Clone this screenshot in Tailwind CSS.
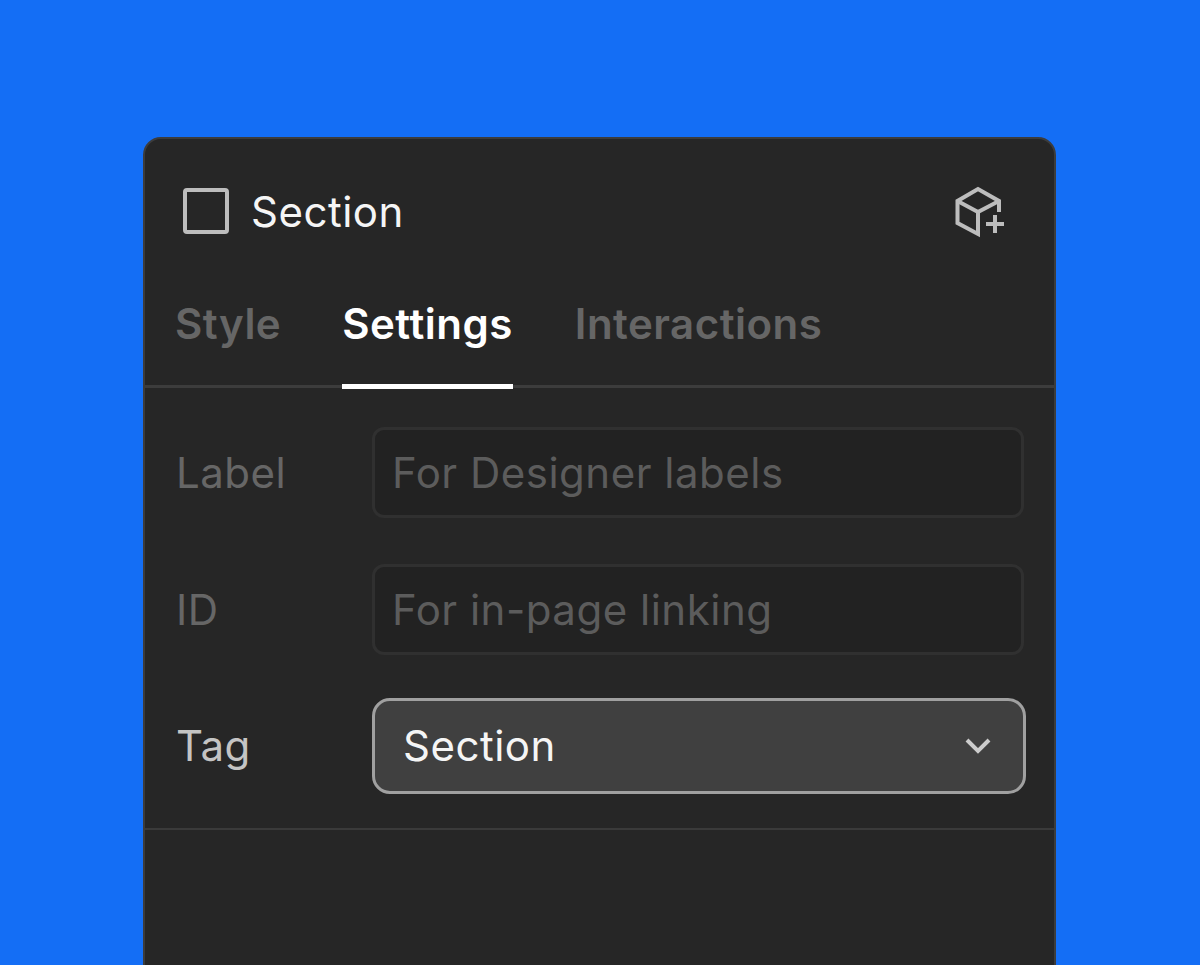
<!DOCTYPE html>
<html lang="en">
<head>
    <meta charset="UTF-8">
    <title>Section Settings</title>
    <script src="https://cdn.jsdelivr.net/npm/@tailwindcss/browser@4"></script>
</head>
<body class="bg-[#146ef5] h-[965px] overflow-hidden font-['Inter',sans-serif]">
    <div class="ml-[143px] mt-[137px] w-[913px] h-[860px] bg-[#262626] border-2 border-[#3c3c3c] rounded-[18px]">
        <!-- Header -->
        <div class="flex items-center justify-between h-[148px] pb-[4px] pl-[38px] pr-[49px]">
            <div class="flex items-center gap-[22px]">
                <div class="w-[46px] h-[46px] border-4 border-[#bdbdbd] rounded-[4px]"></div>
                <span class="mt-[2px] text-[42px] leading-none text-[#f5f5f5] tracking-[0.5px]">Section</span>
            </div>
            <svg class="w-[52px] h-[52px] mt-[2px]" viewBox="0 0 52 52" fill="none" stroke="#bdbdbd" stroke-width="4">
                <path d="M46 26V15L25 3 4.500 15v22L25 48V26"/>
                <path d="M4.500 15L25 26l21-11"/>
                <path d="M33 38h18M42 29v18"/>
            </svg>
        </div>
        <!-- Tabs -->
        <div class="flex gap-[61px] h-[101px] pl-[30px] border-b-[3px] border-[#3c3c3c] text-[42px] font-semibold tracking-[0.5px]">
            <div class="text-[#666666] pt-[5px] leading-[64px]">Style</div>
            <div class="h-[102px] pt-[5px] leading-[64px] text-white border-b-[5px] border-white">Settings</div>
            <div class="ml-[1px] text-[#666666] pt-[5px] leading-[64px]">Interactions</div>
        </div>
        <!-- Fields -->
        <div class="flex flex-col h-[442px] pl-[31px] pt-[39px] border-b-2 border-[#3a3a3a] text-[42px] tracking-[0.5px]">
            <div class="flex items-center h-[91px]">
                <span class="w-[196px] text-[#666666]">Label</span>
                <div class="flex items-center w-[652px] h-[91px] pl-[17px] bg-[#222222] border-[3px] border-[#303030] rounded-[12px] text-[#5c5c5c]">For Designer labels</div>
            </div>
            <div class="flex items-center h-[91px] mt-[46px]">
                <span class="w-[196px] text-[#666666]">ID</span>
                <div class="flex items-center w-[652px] h-[91px] pl-[17px] bg-[#222222] border-[3px] border-[#303030] rounded-[12px] text-[#5c5c5c]">For in-page linking</div>
            </div>
            <div class="flex items-center h-[96px] mt-[43px]">
                <span class="w-[196px] pb-[2px] text-[#c4c4c4]">Tag</span>
                <div class="flex items-center justify-between shrink-0 w-[654px] h-[96px] pl-[28px] pr-[31px] pb-[2px] bg-[#404040] border-[3px] border-[#a0a0a0] rounded-[18px] text-[#f5f5f5]">
                    <span>Section</span>
                    <svg class="w-[28px] h-[18px] mt-[2px]" viewBox="0 0 28 18" fill="none" stroke="#cccccc" stroke-width="4">
                        <path d="M3 3l11 11 11-11"/>
                    </svg>
                </div>
            </div>
        </div>
    </div>
</body>
</html>
